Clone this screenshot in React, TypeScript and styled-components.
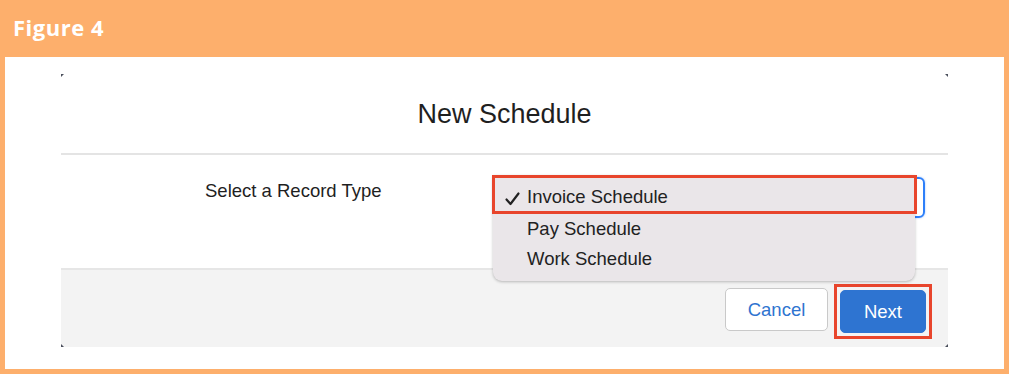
import React from "react";
import styled, { createGlobalStyle } from "styled-components";

const GlobalStyle = createGlobalStyle`
  html, body {
    margin: 0;
    padding: 0;
    background: #ffffff;
  }
  * {
    box-sizing: border-box;
  }
`;

const Frame = styled.div`
  width: 1009px;
  height: 374px;
  background-color: #fdaf6c;
  padding: 0 5px 5px 5px;
  display: flex;
  flex-direction: column;
`;

const FigureHeader = styled.div`
  height: 57px;
  display: flex;
  align-items: center;
  padding-left: 8px;
  padding-bottom: 4px;
  font-family: "Open Sans", "Liberation Sans", sans-serif;
  font-weight: 700;
  font-size: 22px;
  letter-spacing: 0.5px;
  color: #ffffff;
`;

const Panel = styled.div`
  flex: 1;
  background-color: #ffffff;
  padding: 17px 56px 22px 56px;
`;

const Modal = styled.div`
  position: relative;
  height: 273px;
  display: flex;
  flex-direction: column;
  font-family: "Liberation Sans", Arial, Helvetica, sans-serif;
  color: #1f1f1f;
`;

const Corner = styled.span<{ $pos: "tl" | "tr" | "bl" | "br" }>`
  position: absolute;
  width: 3px;
  height: 3px;
  background: #4a4f5c;
  z-index: 3;
  ${({ $pos }) => ($pos[0] === "t" ? "top: 0;" : "bottom: 0;")}
  ${({ $pos }) => ($pos[1] === "l" ? "left: 0;" : "right: 0;")}
  clip-path: ${({ $pos }) =>
    $pos === "tl"
      ? "polygon(0 0, 100% 0, 0 100%)"
      : $pos === "tr"
      ? "polygon(0 0, 100% 0, 100% 100%)"
      : $pos === "bl"
      ? "polygon(0 0, 100% 100%, 0 100%)"
      : "polygon(100% 0, 100% 100%, 0 100%)"};
`;

const ModalHeader = styled.div`
  height: 81px;
  display: flex;
  align-items: center;
  justify-content: center;
  border-bottom: 2px solid #e4e4e4;
  font-size: 27px;
  padding-top: 1px;
`;

const ModalBody = styled.div`
  position: relative;
  height: 113px;
  display: flex;
  align-items: flex-start;
  padding: 22px 23px 0 144px;
`;

const Label = styled.div`
  width: 288px;
  font-size: 18.5px;
  line-height: 28px;
`;

const SelectWrap = styled.div`
  position: relative;
  flex: 1;
`;

const SelectBox = styled.div`
  height: 41px;
  border: 2px solid #2d7ff9;
  border-radius: 6px;
  box-shadow: 0 0 2px rgba(45, 127, 249, 0.5);
`;

const Dropdown = styled.ul`
  position: absolute;
  top: -2px;
  left: 0;
  width: 422px;
  margin: 0;
  padding: 0 0 7px 0;
  list-style: none;
  background-color: #eae6e9;
  border-radius: 0 0 9px 9px;
  box-shadow: 0 1px 3px rgba(0, 0, 0, 0.25);
  z-index: 2;
`;

const Option = styled.li<{ $selected?: boolean }>`
  position: relative;
  height: ${({ $selected }) => ($selected ? "39px" : "30px")};
  display: flex;
  align-items: center;
  padding-left: 34px;
  font-size: 18.5px;
  color: #222222;
  ${({ $selected }) =>
    $selected &&
    `
    margin: 0 -2px 0 -1px;
    padding-left: 32px;
    padding-top: 5px;
    border: 3px solid #e8452c;
  `}
`;

const Check = styled.svg`
  position: absolute;
  left: 10px;
  top: 14px;
  width: 15px;
  height: 14px;
`;

const ModalFooter = styled.div`
  flex: 1;
  background-color: #f3f3f3;
  border-top: 2px solid #e6e6e6;
  display: flex;
  justify-content: flex-end;
  align-items: flex-start;
  padding: 14px 16px 0 0;
`;

const CancelButton = styled.button`
  height: 43px;
  width: 103px;
  margin-top: 4px;
  margin-right: 6px;
  border-radius: 5px;
  font-family: "Liberation Sans", Arial, Helvetica, sans-serif;
  font-size: 18.5px;
  border: 1px solid #c9c9c9;
  background-color: #ffffff;
  color: #2f74d0;
`;

const Highlight = styled.div`
  border: 3px solid #e8452c;
  padding: 3px;
`;

const NextButton = styled.button`
  display: block;
  height: 43px;
  width: 86px;
  border-radius: 5px;
  font-family: "Liberation Sans", Arial, Helvetica, sans-serif;
  font-size: 18.5px;
  border: 1px solid #2e74d1;
  background-color: #2e74d1;
  color: #ffffff;
`;

const options = ["Invoice Schedule", "Pay Schedule", "Work Schedule"];

export default function App() {
  return (
    <>
      <GlobalStyle />
      <Frame>
        <FigureHeader>Figure 4</FigureHeader>
        <Panel>
          <Modal>
            <Corner $pos="tl" />
            <Corner $pos="tr" />
            <Corner $pos="bl" />
            <Corner $pos="br" />
            <ModalHeader>New Schedule</ModalHeader>
            <ModalBody>
              <Label>Select a Record Type</Label>
              <SelectWrap>
                <SelectBox />
                <Dropdown>
                  {options.map((opt, i) => (
                    <Option key={opt} $selected={i === 0}>
                      {i === 0 && (
                        <Check viewBox="0 0 15 14">
                          <path
                            d="M1.5 7.5 L5.5 12 L13.5 1.5"
                            fill="none"
                            stroke="#222"
                            strokeWidth="2.2"
                            strokeLinecap="round"
                            strokeLinejoin="round"
                          />
                        </Check>
                      )}
                      {opt}
                    </Option>
                  ))}
                </Dropdown>
              </SelectWrap>
            </ModalBody>
            <ModalFooter>
              <CancelButton>Cancel</CancelButton>
              <Highlight>
                <NextButton>Next</NextButton>
              </Highlight>
            </ModalFooter>
          </Modal>
        </Panel>
      </Frame>
    </>
  );
}
